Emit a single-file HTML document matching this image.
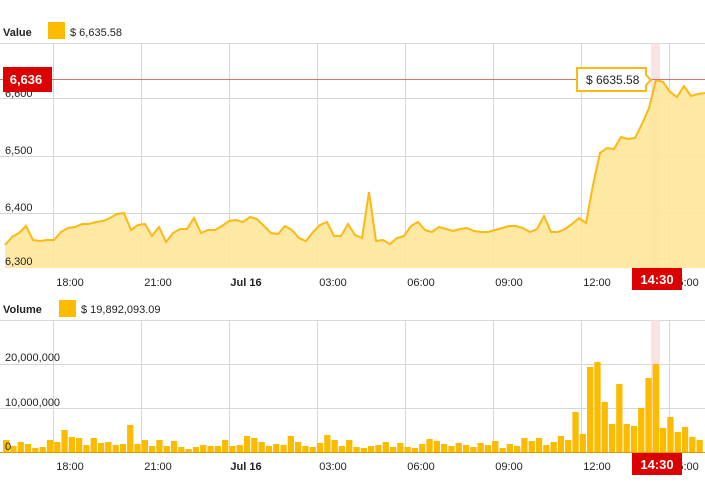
<!DOCTYPE html>
<html><head><meta charset="utf-8"><style>
body{margin:0;width:705px;height:485px;background:#fff;overflow:hidden;font-family:"Liberation Sans",sans-serif}
svg text{font-family:"Liberation Sans",sans-serif;font-size:11px;fill:#222}
</style></head><body>
<svg id="s" width="705" height="485" xmlns="http://www.w3.org/2000/svg">
<g stroke="#d6d6d6" stroke-width="1">
<line x1="0" y1="43.5" x2="705" y2="43.5"/><line x1="0" y1="98.5" x2="705" y2="98.5"/><line x1="0" y1="156.5" x2="705" y2="156.5"/><line x1="0" y1="213.5" x2="705" y2="213.5"/>
<line x1="0" y1="320.5" x2="705" y2="320.5"/><line x1="0" y1="364.5" x2="705" y2="364.5"/><line x1="0" y1="408.5" x2="705" y2="408.5"/>
<line x1="53.5" y1="43" x2="53.5" y2="268"/><line x1="141.5" y1="43" x2="141.5" y2="268"/><line x1="229.5" y1="43" x2="229.5" y2="268"/><line x1="317.5" y1="43" x2="317.5" y2="268"/><line x1="405.5" y1="43" x2="405.5" y2="268"/><line x1="493.5" y1="43" x2="493.5" y2="268"/><line x1="581.5" y1="43" x2="581.5" y2="268"/><line x1="669.5" y1="43" x2="669.5" y2="268"/>
<line x1="53.5" y1="320" x2="53.5" y2="452"/><line x1="141.5" y1="320" x2="141.5" y2="452"/><line x1="229.5" y1="320" x2="229.5" y2="452"/><line x1="317.5" y1="320" x2="317.5" y2="452"/><line x1="405.5" y1="320" x2="405.5" y2="452"/><line x1="493.5" y1="320" x2="493.5" y2="452"/><line x1="581.5" y1="320" x2="581.5" y2="452"/><line x1="669.5" y1="320" x2="669.5" y2="452"/>
</g>
<rect x="651" y="43" width="9" height="225" fill="#fadcdc" opacity="0.8"/>
<rect x="651" y="320" width="9" height="132" fill="#fadcdc" opacity="0.8"/>
<polygon fill="#fde59a" opacity="0.9" points="5,268 5,245 12,237 19,233 26,226 33,240 40,241 47,240 54,240 61,232 68,228 75,227 82,224 89,224 96,222 103,221 110,218 117,214 124,213 131,230 138,225 145,224 152,236 159,227 166,242 173,233 180,229 187,229 194,218 201,233 208,230 215,230 222,226 229,221 236,220 243,222 250,217 257,219 264,226 271,233 278,234 285,226 292,230 299,238 306,241 313,232 320,225 327,222 334,236 341,236 348,224 355,235 362,238 369,192 376,241 383,240 390,244 397,238 404,236 411,226 418,222 425,230 432,232 439,227 446,229 453,231 460,229 467,228 474,231 481,232 488,232 495,230 502,228 509,226 516,226 523,228 530,232 537,229 544,216 551,232 558,232 565,229 572,224 579,218 586,223 593,185 600,153 607,148 614,149 621,137 628,139 635,138 642,124 649,108 656,80 663,82 670,92 677,97 684,86 691,96 698,94 705,93 705,268"/>
<polyline fill="none" stroke="#fdb913" stroke-width="2" points="5,245 12,237 19,233 26,226 33,240 40,241 47,240 54,240 61,232 68,228 75,227 82,224 89,224 96,222 103,221 110,218 117,214 124,213 131,230 138,225 145,224 152,236 159,227 166,242 173,233 180,229 187,229 194,218 201,233 208,230 215,230 222,226 229,221 236,220 243,222 250,217 257,219 264,226 271,233 278,234 285,226 292,230 299,238 306,241 313,232 320,225 327,222 334,236 341,236 348,224 355,235 362,238 369,192 376,241 383,240 390,244 397,238 404,236 411,226 418,222 425,230 432,232 439,227 446,229 453,231 460,229 467,228 474,231 481,232 488,232 495,230 502,228 509,226 516,226 523,228 530,232 537,229 544,216 551,232 558,232 565,229 572,224 579,218 586,223 593,185 600,153 607,148 614,149 621,137 628,139 635,138 642,124 649,108 656,80 663,82 670,92 677,97 684,86 691,96 698,94 705,93"/>
<g id="bars" fill="#fdbb00"></g>
<line x1="0" y1="452.5" x2="705" y2="452.5" stroke="#c9a000" stroke-width="1"/>
<line x1="0" y1="79.5" x2="705" y2="79.5" stroke="#e07070" stroke-width="1"/>
<text x="3" y="36" style="font-weight:bold">Value</text>
<rect x="48" y="22" width="17" height="17" fill="#fdbb00"/>
<text x="70" y="36">$  6,635.58</text>
<text x="5" y="97">6,600</text><text x="5" y="154">6,500</text><text x="5" y="211">6,400</text><text x="5" y="265">6,300</text>
<rect x="3" y="67" width="49" height="25" fill="#dd0000"/>
<text x="26" y="84" text-anchor="middle" style="fill:#fff;font-weight:bold;font-size:13px">6,636</text>
<path d="M577,68 H646 V75 L651,80 L646,85 V91 H577 Z" fill="#fff" stroke="#fdb913" stroke-width="2"/>
<text x="586" y="84" style="font-size:12px">$ 6635.58</text>
<g text-anchor="middle">
<text x="70" y="286">18:00</text><text x="158" y="286">21:00</text><text x="246" y="286" style="font-weight:bold">Jul 16</text><text x="333" y="286">03:00</text><text x="421" y="286">06:00</text><text x="509" y="286">09:00</text><text x="597" y="286">12:00</text><text x="685" y="286">15:00</text>
<text x="70" y="470">18:00</text><text x="158" y="470">21:00</text><text x="246" y="470" style="font-weight:bold">Jul 16</text><text x="333" y="470">03:00</text><text x="421" y="470">06:00</text><text x="509" y="470">09:00</text><text x="597" y="470">12:00</text><text x="685" y="470">15:00</text>
</g>
<rect x="632" y="268" width="50" height="22" fill="#dd0000"/>
<text x="657" y="284" text-anchor="middle" style="fill:#fff;font-weight:bold;font-size:13px">14:30</text>
<rect x="632" y="453" width="50" height="22" fill="#dd0000"/>
<text x="657" y="469" text-anchor="middle" style="fill:#fff;font-weight:bold;font-size:13px">14:30</text>
<text x="3" y="313" style="font-weight:bold">Volume</text>
<rect x="59" y="300" width="17" height="17" fill="#fdbb00"/>
<text x="81" y="313">$  19,892,093.09</text>
<text x="5" y="361">20,000,000</text><text x="5" y="406">10,000,000</text><text x="5" y="450">0</text>
</svg>
<script>
var h=[12,6,10,8,4,5,12,10,22,15,14,7,14,9,10,7,8,27,8,12,6,12,6,11,5,3,5,7,6,6,12,6,7,16,14,10,6,8,7,16,10,6,5,9,17,12,6,12,5,4,6,7,10,5,9,5,4,8,13,11,8,6,9,7,5,9,7,11,4,8,6,14,11,14,7,10,16,12,40,18,85,90,50,28,68,28,26,44,74,88,24,35,20,25,15,12];
var g=document.getElementById('bars'),s='',x=3,w=7.3;
for(var i=0;i<h.length;i++){s+='<rect x="'+(x+i*w).toFixed(1)+'" y="'+(452-h[i])+'" width="'+(w-1).toFixed(1)+'" height="'+h[i]+'"/>';}
g.innerHTML=s;
</script>
</body></html>
